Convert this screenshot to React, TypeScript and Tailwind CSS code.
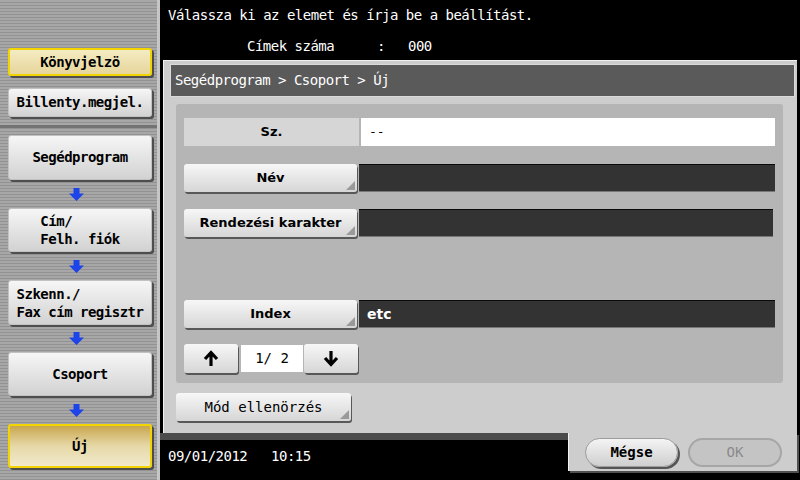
import React from 'react';

const mono = "font-['DejaVu_Sans_Mono','Liberation_Mono',monospace]";
const sans = "font-['DejaVu_Sans','Liberation_Sans',sans-serif]";

const BlueArrow = () => (
  <svg width="15" height="13" viewBox="0 0 15 13">
    <path d="M4.5 0h6v5.5h4.5l-7.5 7.5-7.5-7.5h4.5z" fill="#1d44e8" />
  </svg>
);

const Corner = () => (
  <svg className="absolute right-[2px] bottom-[2px]" width="9" height="9" viewBox="0 0 9 9">
    <path d="M9 0v9h-9z" fill="#9a9a9a" />
  </svg>
);

const SideButton = ({ children, h, gold }: { children: React.ReactNode; h: string; gold?: 'light' | 'dark' }) => {
  let look = 'bg-gradient-to-b from-[#f6f6f6] to-[#d2d2d2] border border-[#c2c2c2]';
  if (gold === 'light') look = 'bg-gradient-to-b from-[#f5ecc2] to-[#e6d59c] border-2 border-[#f2d400]';
  if (gold === 'dark') look = 'bg-gradient-to-b from-[#c9a64c] via-[#e6d8a6] to-[#f1e9cc] border-2 border-[#f2d400]';
  return (
    <div className={`ml-[8px] w-[144px] ${h} ${look} rounded-[3px] shadow-[2px_2px_0_#4e4e4e] flex items-center justify-center text-[14px] tracking-[-0.5px] font-bold text-black ${mono}`}>
      {children}
    </div>
  );
};

const ArrowGap = ({ h }: { h: string }) => (
  <div className={`${h} w-[152px] flex items-center justify-center`}>
    <BlueArrow />
  </div>
);

const FieldButton = ({ label, w = 'w-[173px]' }: { label: string; w?: string }) => (
  <div className={`relative ${w} h-[28px] bg-gradient-to-b from-[#f7f7f7] to-[#d6d6d6] rounded-[3px] shadow-[1px_2px_0_#585858] flex items-center justify-center text-[13px] font-bold text-black ${sans}`}>
    {label}
    <Corner />
  </div>
);

const DarkField = ({ w, children }: { w: string; children?: React.ReactNode }) => (
  <div className={`ml-[2px] ${w} h-[28px] bg-[#333333] border-t border-t-[#0a0a0a] border-b border-b-[#777777] flex items-center pl-[8px] text-[14px] font-bold text-white ${sans}`}>
    {children}
  </div>
);

const ArrowIcon = ({ down }: { down?: boolean }) => (
  <svg width="16" height="17" viewBox="0 0 16 17" className={down ? 'rotate-180' : ''}>
    <path d="M8 16V3M2 9l6-6.5L14 9" stroke="#000" strokeWidth="3.2" fill="none" />
  </svg>
);

const PagerButton = ({ down }: { down?: boolean }) => (
  <div className="w-[54px] h-[29px] bg-gradient-to-b from-[#f7f7f7] to-[#d6d6d6] rounded-[3px] shadow-[1px_2px_0_#585858] flex items-center justify-center">
    <ArrowIcon down={down} />
  </div>
);

export default function App() {
  return (
    <div className="w-[800px] h-[480px] flex bg-black overflow-hidden">
      {/* left navigation */}
      <aside className="w-[160px] h-full flex flex-col bg-[repeating-linear-gradient(180deg,#a7a7a7_0px,#a7a7a7_2px,#929292_2px,#929292_3px)] border-r-[3px] border-r-[#c6c6c6]">
        <div className="h-[48px]" />
        <SideButton h="h-[28px]" gold="light">Könyvjelzö</SideButton>
        <div className="h-[12px]" />
        <SideButton h="h-[29px]">Billenty.megjel.</SideButton>
        <div className="mt-[8px] h-[3px] bg-[#737373]" />
        <div className="h-[7px]" />
        <SideButton h="h-[45px]">Segédprogram</SideButton>
        <ArrowGap h="h-[28px]" />
        <SideButton h="h-[44px]">
          <div className="leading-[18px]">Cím/<br />Felh. fiók</div>
        </SideButton>
        <ArrowGap h="h-[28px]" />
        <SideButton h="h-[45px]">
          <div className="leading-[18px]">Szkenn./<br />Fax cím regisztr</div>
        </SideButton>
        <ArrowGap h="h-[27px]" />
        <SideButton h="h-[44px]">Csoport</SideButton>
        <ArrowGap h="h-[28px]" />
        <SideButton h="h-[44px]" gold="dark">Új</SideButton>
      </aside>

      {/* main area */}
      <main className={`flex-1 flex flex-col ${mono}`}>
        <div className="h-[60px] text-white text-[14px] tracking-[-0.5px] leading-[18px]">
          <div className="pt-[6px] pl-[8px]">Válassza ki az elemet és írja be a beállítást.</div>
          <div className="mt-[13px] flex pl-[87px]">
            <span className="w-[130px]">Címek száma</span>
            <span className="w-[31px]">:</span>
            <span>000</span>
          </div>
        </div>

        <div className="ml-[3px] w-[634px] h-[373px] bg-[#cdcdcd] border-t border-l border-[#f2f2f2] pt-[3px] pl-[6px] pr-[2px] flex flex-col">
          <div className="h-[33px] bg-[#5a5a5a] border border-[#dadada] flex items-center pl-[4px] text-white text-[14px] tracking-[-0.5px]">
            Segédprogram &gt; Csoport &gt; Új
          </div>

          <div className="mt-[7px] ml-[6px] w-[607px] h-[279px] bg-[#b5b5b5] rounded-[3px] pt-[14px] pl-[8px] flex flex-col">
            <div className="flex h-[28px]">
              <div className={`w-[175px] bg-[#d6d6d6] flex items-center justify-center text-[13px] font-bold text-black ${sans}`}>Sz.</div>
              <div className="ml-[2px] w-[414px] bg-white flex items-center pl-[8px] text-[13px] text-black">--</div>
            </div>
            <div className="flex mt-[18px]">
              <FieldButton label="Név" />
              <DarkField w="w-[416px]" />
            </div>
            <div className="flex mt-[17px]">
              <FieldButton label="Rendezési karakter" />
              <DarkField w="w-[414px]" />
            </div>
            <div className="flex mt-[63px]">
              <FieldButton label="Index" />
              <DarkField w="w-[416px]">etc</DarkField>
            </div>
            <div className="flex mt-[16px] items-center">
              <PagerButton />
              <div className="ml-[3px] w-[62px] h-[27px] bg-white flex items-center justify-center text-[14px] text-black whitespace-pre">1/ 2</div>
              <div className="ml-[1px]">
                <PagerButton down />
              </div>
            </div>
          </div>

          <div className="mt-[10px] ml-[6px]">
            <div className={`relative w-[175px] h-[28px] bg-gradient-to-b from-[#f7f7f7] to-[#d6d6d6] rounded-[3px] shadow-[1px_2px_0_#585858] flex items-center justify-center text-[14px] text-black ${mono}`}>
              Mód ellenörzés
              <Corner />
            </div>
          </div>
        </div>

        <div className="flex h-[47px]">
          <div className="w-[408px] flex flex-col">
            <div className="h-[7px] bg-[#4c4c4c]" />
            <div className="pt-[7px] pl-[8px] text-white text-[14px] tracking-[-0.5px] leading-[18px] whitespace-pre">09/01/2012   10:15</div>
          </div>
          <div className="w-[229px] h-[38px] bg-[#cdcdcd] border-l border-[#f2f2f2] shadow-[2px_2px_0_#505050] flex items-start pt-[5px] pl-[16px]">
            <div className="w-[93px] h-[29px] rounded-full bg-gradient-to-b from-[#f4f4f4] to-[#cfcfcf] border border-[#9c9c9c] shadow-[2px_2px_0_#555] flex items-center justify-center text-[14px] font-bold text-black">
              Mégse
            </div>
            <div className="ml-[10px] w-[94px] h-[29px] rounded-full bg-[#c4c4c4] border-2 border-[#a6a6a6] flex items-center justify-center text-[14px] text-[#8a8a8a]">
              OK
            </div>
          </div>
        </div>
      </main>
    </div>
  );
}
